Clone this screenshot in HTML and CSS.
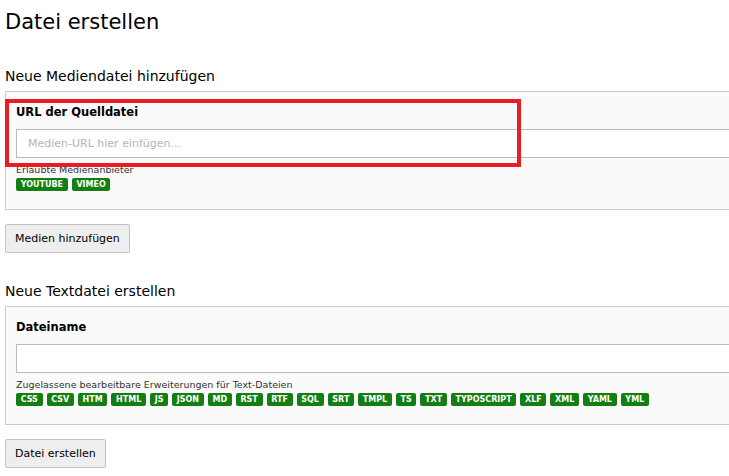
FILE: index.html
```html
<!DOCTYPE html>
<html lang="de">
<head>
    <meta charset="UTF-8">
    <title>Datei erstellen</title>
    <link rel="stylesheet" href="styles.css">
</head>
<body>
    <h1>Datei erstellen</h1>

    <h2>Neue Mediendatei hinzufügen</h2>
    <div class="panel media-panel">
        <div class="highlight"></div>
        <label class="field-label" for="media-url">URL der Quelldatei</label>
        <input type="text" id="media-url" class="field-input" placeholder="Medien-URL hier einfügen...">
        <div class="help-text">Erlaubte Medienanbieter</div>
        <div class="badges">
            <span class="badge">YOUTUBE</span>
            <span class="badge">VIMEO</span>
        </div>
    </div>
    <button class="btn">Medien hinzufügen</button>

    <h2>Neue Textdatei erstellen</h2>
    <div class="panel">
        <label class="field-label" for="file-name">Dateiname</label>
        <input type="text" id="file-name" class="field-input">
        <div class="help-text">Zugelassene bearbeitbare Erweiterungen für Text-Dateien</div>
        <div class="badges">
            <span class="badge">CSS</span>
            <span class="badge">CSV</span>
            <span class="badge">HTM</span>
            <span class="badge">HTML</span>
            <span class="badge">JS</span>
            <span class="badge">JSON</span>
            <span class="badge">MD</span>
            <span class="badge">RST</span>
            <span class="badge">RTF</span>
            <span class="badge">SQL</span>
            <span class="badge">SRT</span>
            <span class="badge">TMPL</span>
            <span class="badge">TS</span>
            <span class="badge">TXT</span>
            <span class="badge">TYPOSCRIPT</span>
            <span class="badge">XLF</span>
            <span class="badge">XML</span>
            <span class="badge">YAML</span>
            <span class="badge">YML</span>
        </div>
    </div>
    <button class="btn">Datei erstellen</button>
</body>
</html>
```

FILE: styles.css
```css
* {
    margin: 0;
    padding: 0;
    box-sizing: border-box;
}

body {
    font-family: 'DejaVu Sans', Verdana, sans-serif;
    font-size: 11px;
    color: #000;
    background-color: #fff;
    padding: 0 0 0 5px;
    width: 760px;
    overflow: hidden;
}

h1 {
    font-size: 21px;
    font-weight: normal;
    line-height: 28px;
    padding-top: 8px;
    margin-bottom: 31px;
}

h2 {
    font-size: 14px;
    font-weight: normal;
    line-height: 18px;
    margin-bottom: 6px;
}

.panel {
    position: relative;
    background-color: #fafafa;
    border: 1px solid #ccc;
    padding: 13px 11px 18px 10px;
    margin-bottom: 14px;
}

.highlight {
    position: absolute;
    left: -1px;
    top: 7px;
    width: 516px;
    height: 68px;
    border: 4px solid #ec1c24;
    z-index: 2;
    pointer-events: none;
}

.field-label {
    display: block;
    font-weight: bold;
    font-size: 11.5px;
    line-height: 14px;
    margin-bottom: 10px;
}

.field-input {
    display: block;
    width: 100%;
    height: 29px;
    border: 1px solid #bbb;
    background-color: #fff;
    padding: 0 11px;
    font-family: inherit;
    font-size: 11px;
    color: #333;
}

.field-input::placeholder {
    color: #b4b4b4;
}

.help-text {
    font-size: 9.5px;
    line-height: 11px;
    color: #333;
    margin-top: 6px;
}

.badges {
    display: flex;
    flex-wrap: wrap;
    gap: 4px;
    margin-top: 3px;
}

.badge {
    background-color: #137f13;
    color: #fff;
    font-size: 8px;
    font-weight: bold;
    line-height: 13px;
    padding: 0 4.7px;
    border-radius: 2px;
}

.btn {
    display: block;
    font-family: inherit;
    font-size: 11px;
    color: #000;
    background-color: #eee;
    border: 1px solid #c3c3c3;
    border-radius: 2px;
    height: 29px;
    padding: 0 9px;
    margin-bottom: 29px;
}

.btn:last-child {
    margin-bottom: 0;
}
```
